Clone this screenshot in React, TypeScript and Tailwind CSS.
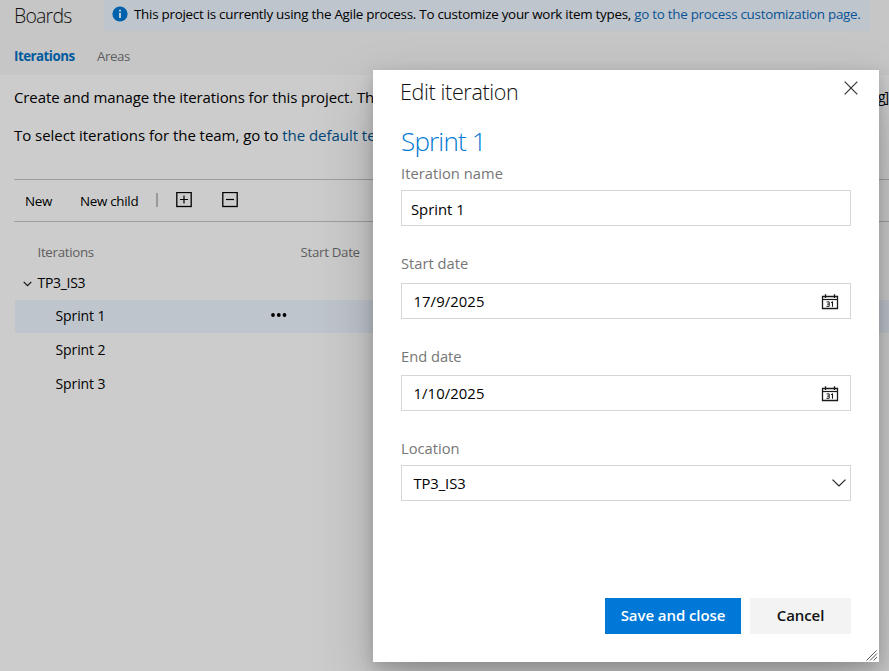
import type { ReactNode } from "react";

function CalendarIcon() {
  return (
    <svg width="18" height="16" viewBox="0 0 18 16" fill="none" stroke="#1a1a1a" className="mt-px shrink-0">
      <path d="M1.5 2.5H16.5V14.5H1.5Z" strokeWidth="1.3" />
      <path d="M1.5 5.5H16.5" strokeWidth="1.2" />
      <path d="M4.5 0.3V4M13.5 0.3V4" strokeWidth="1.3" />
      <path d="M5.6 7.9H8.2V12.3H5.4M6 10.1H8.2" strokeWidth="1" />
      <path d="M10 8.9L11.5 8V12.8" strokeWidth="1.1" />
    </svg>
  );
}

function ExpandIcon({ plus }: { plus?: boolean }) {
  return (
    <svg width="16" height="16" viewBox="0 0 16 16" fill="none" stroke="#000">
      <rect x="0.8" y="0.5" width="14.4" height="14" strokeWidth="1.3" />
      <path d={plus ? "M4 7.5H12M8 3.5V11.5" : "M4 7.5H12"} strokeWidth="1.2" />
    </svg>
  );
}

function Field({ label, value, labelClass, inputClass, valueClass, icon }: {
  label: string;
  value: string;
  labelClass: string;
  inputClass: string;
  valueClass?: string;
  icon?: ReactNode;
}) {
  return (
    <div>
      <div className={`h-5 text-[14.7px] leading-5 text-[#767676] ${labelClass}`}>{label}</div>
      <div className={`flex h-9 items-center justify-between border border-[#d6d6d6] text-[14.8px] text-black ${inputClass}`}>
        <span className={valueClass}>{value}</span>
        {icon}
      </div>
    </div>
  );
}

const sprints = ["Sprint 1", "Sprint 2", "Sprint 3"];

export default function App() {
  return (
    <div className="relative h-[671px] w-[889px] overflow-hidden bg-[#ccc] font-['Open_Sans','Noto_Sans',sans-serif] whitespace-nowrap text-black">
      <header className="h-[75px] bg-[#c6c6c6]">
        <div className="flex h-[31px] pl-[14px]">
          <h1 className="w-[90px] text-[19.5px] leading-[31px] font-light tracking-[-0.8px] text-[#111]">Boards</h1>
          <div className="flex w-[766px] items-center bg-[#bfc5cd] pl-2 text-[13.4px] leading-[29px]">
            <svg width="16" height="16" viewBox="0 0 16 16" className="mr-[6px] -mt-[3px]">
              <circle cx="8" cy="8" r="7.6" fill="#0062ad" />
              <path d="M7.1 6.7H8.9V12H7.1ZM7.1 3.8H8.9V5.5H7.1Z" fill="#d0d4d8" />
            </svg>
            <span className="-mt-[2px] tracking-[-0.265px]">
              This project is currently using the Agile process. To customize your work item types,{" "}
              <a className="text-[#075394]">go to the process customization page.</a>
            </span>
          </div>
        </div>
        <nav className="mt-[15px] flex gap-[22px] pl-[14px] text-[13.3px] leading-5">
          <span className="w-[61px] font-bold tracking-[-0.5px] text-[#005a9e]">Iterations</span>
          <span className="tracking-[-0.4px] text-[#5e5e5e]">Areas</span>
        </nav>
      </header>

      <main className="pl-[14px]">
        <div className="flex justify-between pt-[12px] text-[15px] leading-5 tracking-[-0.11px]">
          <p>Create and manage the iterations for this project. Th</p>
          <p className="w-[11px] text-[14px] tracking-[-1.2px]">g]</p>
        </div>
        <p className="mt-[18px] text-[15px] leading-5 tracking-[-0.04px]">
          To select iterations for the team, go to <a className="text-[#004578]">the default te</a>
        </p>

        <div className="mt-[34px] flex h-[43px] items-center border-y border-[#9e9e9e] pl-[11px] text-[13.4px] tracking-[-0.3px]">
          <span className="mt-[2px] w-[55px]">New</span>
          <span className="mt-[2px] w-[76px]">New child</span>
          <span className="-mt-[2px] h-[14px] w-[2px] bg-[#999]" />
          <span className="ml-[18px] -mt-[2px]"><ExpandIcon plus /></span>
          <span className="ml-[30px] -mt-[2px]"><ExpandIcon /></span>
        </div>

        <div className="mt-[20px] flex pl-[23.5px] text-[13.3px] leading-5 tracking-[-0.3px] text-[#5e5e5e]">
          <span className="w-[263px]">Iterations</span>
          <span>Start Date</span>
        </div>
        <div className="mt-[10px] flex h-5 items-center pl-[9px] text-[14px] tracking-[-0.3px]">
          <svg width="9" height="6" viewBox="0 0 9 6" fill="none" stroke="#111" strokeWidth="1.2" className="mt-[3px] mr-[5.5px]">
            <path d="M0.7 0.8L4.5 4.6L8.3 0.8" />
          </svg>
          TP3_IS3
        </div>
        <div className="mt-[8px] ml-px">
          {sprints.map((name, i) => (
            <div
              key={name}
              className={
                i === 0
                  ? "mb-px flex h-[33px] items-center bg-[#bfc5cd] pl-[40.5px] text-[14px] tracking-[-0.1px]"
                  : "mb-px flex h-[33px] items-center pl-[40.5px] text-[14px] tracking-[-0.1px]"
              }
            >
              <span className="-mt-[2px] w-[215.5px]">{name}</span>
              {i === 0 && (
                <svg width="16" height="4" viewBox="0 0 16 4" fill="#000" className="-mt-[3px]">
                  <circle cx="2" cy="2" r="1.9" />
                  <circle cx="7.8" cy="2" r="1.9" />
                  <circle cx="13.5" cy="2" r="1.9" />
                </svg>
              )}
            </div>
          ))}
        </div>
      </main>

      <section className="absolute top-[70px] left-[373px] h-[592px] w-[506px] bg-white px-7 shadow-[0_25.6px_57.6px_rgba(0,0,0,0.22),0_4.8px_14.4px_rgba(0,0,0,0.18)]">
        <div className="flex justify-between pt-[7px]">
          <h2 className="-ml-px text-[21.5px] leading-[30px] font-light tracking-[-0.35px] text-[#111]">Edit iteration</h2>
          <svg width="14" height="14" viewBox="0 0 14 14" fill="none" stroke="#333" strokeWidth="1.2" className="mt-[4px] mr-[-7px]">
            <path d="M0.7 0.7L13.3 13.3M13.3 0.7L0.7 13.3" />
          </svg>
        </div>
        <h3 className="mt-[16px] text-[26px] leading-9 font-light tracking-[-0.8px] text-[#0078d4]">Sprint 1</h3>
        <div className="mt-[4px]">
          <Field label="Iteration name" value="Sprint 1" labelClass="mb-[7px] tracking-[0.04px]" inputClass="pl-[9px]" valueClass="mt-[2px]" />
        </div>
        <div className="mt-[27px]">
          <Field label="Start date" value="17/9/2025" labelClass="mb-[10px]" inputClass="pl-[11.5px] pr-[11px] tracking-[0.1px]" icon={<CalendarIcon />} />
        </div>
        <div className="mt-[27px]">
          <Field label="End date" value="1/10/2025" labelClass="mb-[9px]" inputClass="pl-[11.5px] pr-[11px] tracking-[0.1px]" icon={<CalendarIcon />} />
        </div>
        <div className="mt-[27px]">
          <Field
            label="Location"
            value="TP3_IS3"
            labelClass="mb-[7px]"
            inputClass="pl-[11.5px] pr-[4px] tracking-[-0.1px]"
            icon={
              <svg width="14" height="8" viewBox="0 0 14 8" fill="none" stroke="#222" strokeWidth="1.2">
                <path d="M0.5 0.6L7 7L13.5 0.6" />
              </svg>
            }
          />
        </div>
        <div className="mt-[97px] flex justify-end gap-[9px] text-[15px] font-semibold tracking-[-0.07px]">
          <button className="h-9 w-[136px] bg-[#0078d7] pb-[2px] text-white">Save and close</button>
          <button className="h-9 w-[101px] bg-[#f3f3f3] pb-[2px] text-[#111]">Cancel</button>
        </div>
        <svg width="12" height="11" viewBox="0 0 12 11" fill="none" stroke="#555" strokeWidth="1" className="absolute right-[1px] bottom-[1px]">
          <path d="M0.5 10.5L10.5 0.5M4 10.5L11 3.5M7.5 10.5L11 7" />
        </svg>
      </section>
    </div>
  );
}
